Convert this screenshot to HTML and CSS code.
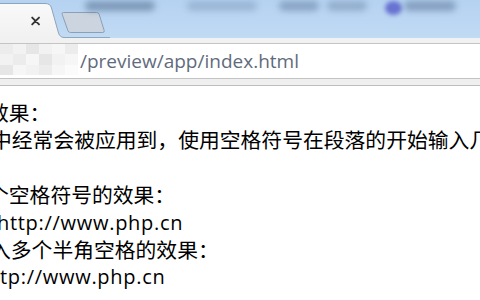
FILE: index.html
```html
<!DOCTYPE html>
<html lang="zh-CN">
<head>
<meta charset="utf-8">
<title>preview</title>
<link rel="stylesheet" href="styles.css">
</head>
<body>
<div class="window">
  <div class="titlebar">
    <div class="blobs">
      <span class="blob b1"></span>
      <span class="blob b2"></span>
      <span class="blob b3"></span>
      <span class="blob b4"></span>
      <span class="blob dot"></span>
      <span class="blob b5"></span>
    </div>
    <svg class="tabstrip" width="110" height="38" viewBox="0 0 110 38">
      <defs>
        <linearGradient id="tabg" x1="0" y1="0" x2="0" y2="1">
          <stop offset="0" stop-color="#f9f9f9"/>
          <stop offset="1" stop-color="#f1f1f1"/>
        </linearGradient>
      </defs>
      <line x1="60" y1="37.5" x2="110" y2="37.5" stroke="#8fa8c1" stroke-width="1"/>
      <path d="M0,3.5 L45,3.5 C49,3.5 50.5,5 51.5,8 L58.5,33 C59.5,36 61.5,37.5 64,37.5 L64,38 L0,38 Z" fill="url(#tabg)"/>
      <path d="M0,3.5 L45,3.5 C49,3.5 50.5,5 51.5,8 L58.5,33 C59.5,36 61.5,37.5 64,37.5" fill="none" stroke="#8ea4bb" stroke-width="1"/>
      <path d="M32.2,17.6 L39,24.4 M39,17.6 L32.2,24.4" stroke="#333" stroke-width="1.9" stroke-linecap="round"/>
      <path d="M63.5,12.5 L96.5,12.5 Q98.5,12.5 99.2,14.4 L104.2,30.6 Q104.7,32.5 102.7,32.5 L70.5,32.5 Q68.5,32.5 67.9,30.6 L62.2,14.4 Q61.6,12.5 63.5,12.5 Z" fill="#ccd5df" stroke="#8d9fb3" stroke-width="1"/>
    </svg>
  </div>
  <div class="toolbar">
    <div class="omnibox">
      <div class="mosaic">
        <i class="m1"></i><i class="m2"></i><i class="m3"></i><i class="m2"></i><i class="m4"></i><i class="m1"></i>
        <i class="m2"></i><i class="m1"></i><i class="m4"></i><i class="m3"></i><i class="m2"></i><i class="m4"></i>
        <i class="m3"></i><i class="m4"></i><i class="m2"></i><i class="m1"></i><i class="m4"></i><i class="m5"></i>
      </div>
      <span class="url">/preview/app/index.html</span>
    </div>
  </div>
  <div class="strip"></div>
  <div class="content">
    <p class="line l1">效果：</p>
    <p class="line l2">中经常会被应用到，使用空格符号在段落的开始输入几个</p>
    <p class="line blank">&nbsp;</p>
    <p class="line l4">个空格符号的效果：</p>
    <p class="line l5 latin">http://www.php.cn</p>
    <p class="line l6">入多个半角空格的效果：</p>
    <p class="line l7 latin">tp://www.php.cn</p>
  </div>
</div>
</body>
</html>
```
FILE: styles.css
```css
html, body {
  margin: 0;
  padding: 0;
  background: #ffffff;
}
.window {
  width: 480px;
  height: 300px;
  overflow: hidden;
  display: flex;
  flex-direction: column;
}
.titlebar {
  height: 38px;
  display: grid;
  background: linear-gradient(#b5d2f1, #bcd7f3 60%, #c1dbf4);
  flex: none;
}
.titlebar > * {
  grid-area: 1 / 1;
}
.tabstrip {
  display: block;
}
.blobs {
  display: flex;
  align-items: flex-start;
  padding: 1px 0 0 85px;
}
.blob {
  display: block;
  height: 10px;
  border-radius: 5px;
  filter: blur(3px);
  background: rgba(70, 95, 130, 0.5);
}
.b1 { width: 70px; }
.b2 { width: 70px; margin-left: 32px; background: rgba(70, 95, 130, 0.25); }
.b3 { width: 40px; margin-left: 22px; background: rgba(70, 95, 130, 0.4); }
.b4 { width: 40px; margin-left: 8px; background: rgba(70, 95, 130, 0.32); }
.dot { width: 17px; height: 14px; border-radius: 50%; margin-left: 18px; filter: blur(2px); background: rgba(85, 90, 200, 0.8); }
.b5 { width: 52px; margin-left: 2px; background: rgba(70, 95, 130, 0.45); }
.toolbar {
  flex: none;
  background: #f1f1f1;
  padding-top: 5px;
}
.omnibox {
  height: 34px;
  background: #ffffff;
  border-top: 1px solid #c4c4c4;
  border-bottom: 1px solid #c2c2c2;
  display: flex;
  align-items: center;
}
.mosaic {
  width: 78px;
  height: 31px;
  display: grid;
  grid-template-columns: repeat(6, 1fr);
  grid-template-rows: repeat(3, 1fr);
  align-self: flex-start;
  flex: none;
}
.mosaic i { display: block; }
.m1 { background: #ececec; }
.m2 { background: #f2f2f2; }
.m3 { background: #e6e6e6; }
.m4 { background: #f6f6f6; }
.m5 { background: #fbfbfb; }
.url {
  font-family: "Open Sans", "Liberation Sans", sans-serif;
  font-size: 19px;
  color: #5f6b7d;
  margin-left: 2px;
  white-space: nowrap;
}
.strip {
  flex: none;
  height: 6px;
  background: #efefef;
  border-bottom: 1px solid #bdbdbd;
}
.content {
  flex: 1;
  padding-top: 13px;
  font-family: "Noto Sans CJK SC", "Noto Sans", sans-serif;
  font-size: 20.8px;
  line-height: 27.4px;
  color: #000;
  overflow: hidden;
}
.line {
  margin: 0;
  white-space: nowrap;
}
.latin {
  font-family: "Open Sans", "Noto Sans", sans-serif;
  font-size: 20px;
  letter-spacing: 0.7px;
}
.line.l1 { margin-left: -12px; }
.line.l2 { margin-left: -9px; }
.line.l4 { margin-left: -12px; }
.line.l5 { margin-left: -3px; }
.line.l6 { margin-left: -10px; }
.line.l7 { margin-left: 0; }
```
